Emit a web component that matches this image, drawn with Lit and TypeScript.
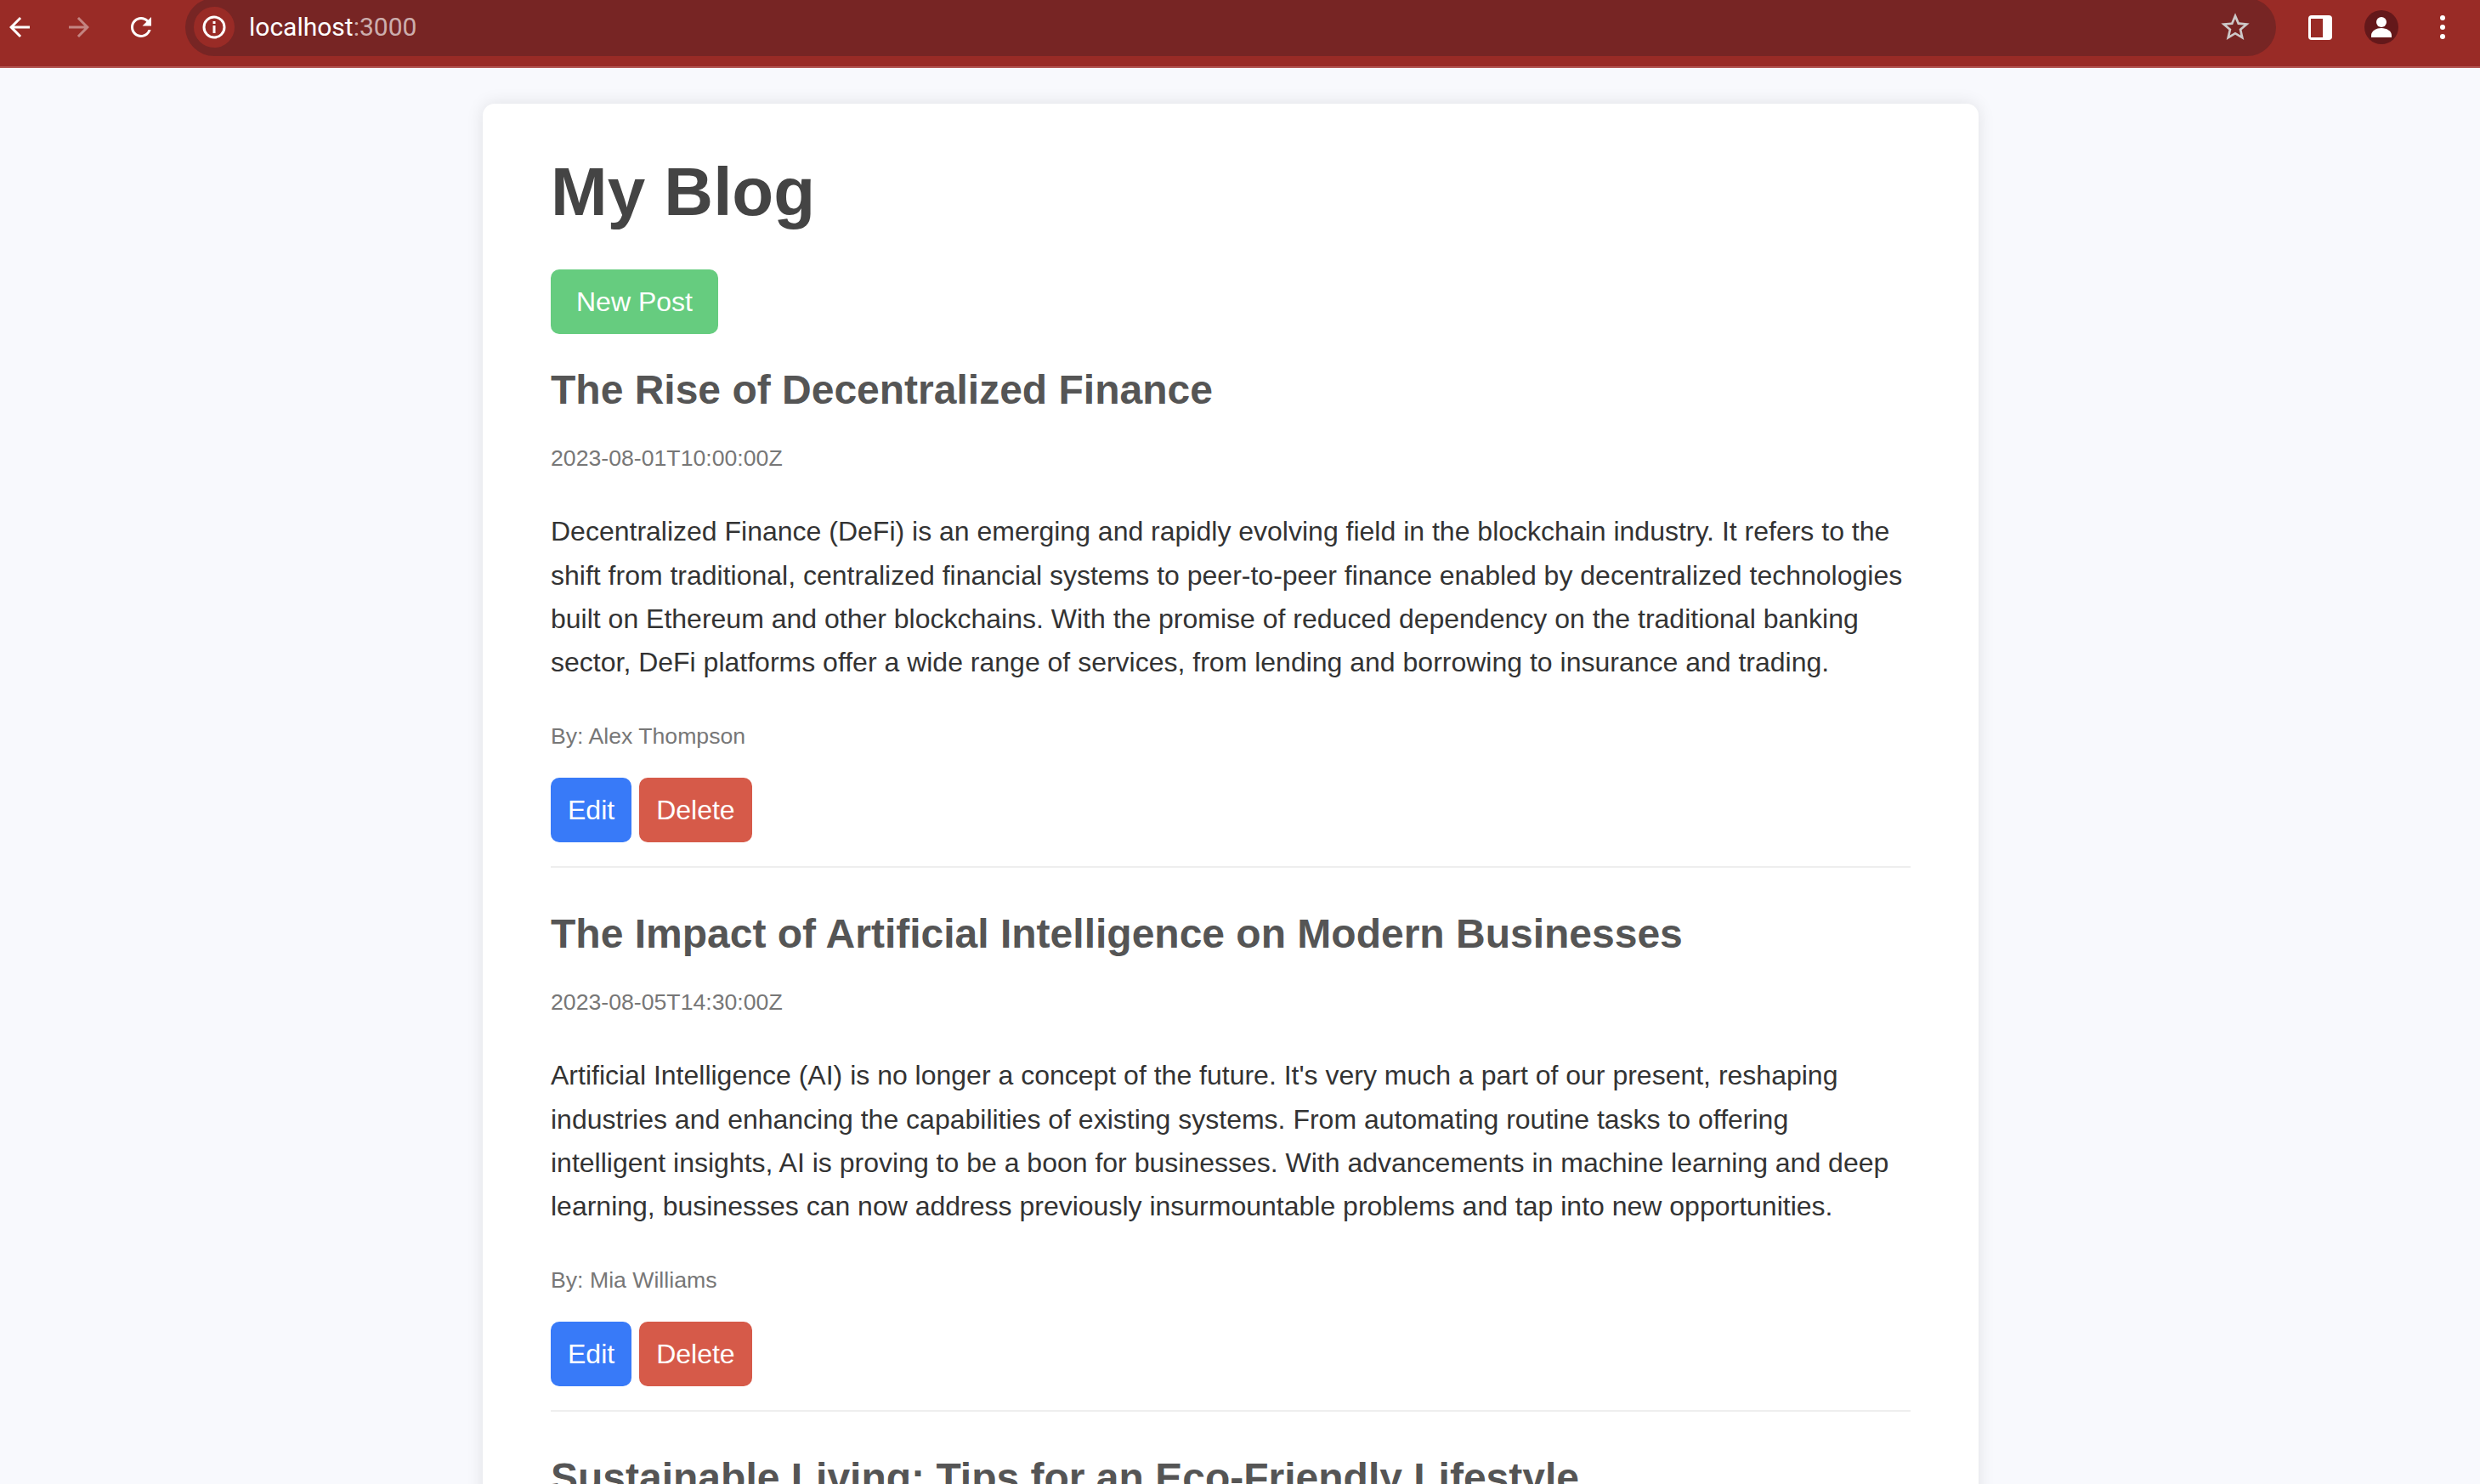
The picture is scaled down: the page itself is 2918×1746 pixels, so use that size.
import { LitElement, html, css, svg } from "lit";
import { customElement } from "lit/decorators.js";

const ICON = {
  back: svg`<path d="M20 11H7.83l5.59-5.59L12 4l-8 8 8 8 1.41-1.41L7.83 13H20v-2z"/>`,
  forward: svg`<path d="M4 11h12.17l-5.59-5.59L12 4l8 8-8 8-1.41-1.41L16.17 13H4v-2z"/>`,
  reload: svg`<path d="M17.65 6.35C16.2 4.9 14.21 4 12 4c-4.42 0-7.99 3.58-7.99 8s3.57 8 7.99 8c3.73 0 6.84-2.55 7.73-6h-2.08c-.82 2.33-3.04 4-5.65 4-3.31 0-6-2.69-6-6s2.69-6 6-6c1.66 0 3.14.69 4.22 1.78L13 11h7V4l-2.35 2.35z"/>`,
  star: svg`<path d="M22 9.24l-7.19-.62L12 2 9.19 8.63 2 9.24l5.46 4.73L5.82 21 12 17.27 18.18 21l-1.63-7.03L22 9.24zM12 15.4l-3.76 2.27 1-4.28-3.32-2.88 4.38-.38L12 6.1l1.71 4.04 4.38.38-3.32 2.88 1 4.28L12 15.4z"/>`,
};

const POSTS = [
  {
    title: "The Rise of Decentralized Finance",
    date: "2023-08-01T10:00:00Z",
    body: "Decentralized Finance (DeFi) is an emerging and rapidly evolving field in the blockchain industry. It refers to the shift from traditional, centralized financial systems to peer-to-peer finance enabled by decentralized technologies built on Ethereum and other blockchains. With the promise of reduced dependency on the traditional banking sector, DeFi platforms offer a wide range of services, from lending and borrowing to insurance and trading.",
    author: "Alex Thompson",
  },
  {
    title: "The Impact of Artificial Intelligence on Modern Businesses",
    date: "2023-08-05T14:30:00Z",
    body: "Artificial Intelligence (AI) is no longer a concept of the future. It's very much a part of our present, reshaping industries and enhancing the capabilities of existing systems. From automating routine tasks to offering intelligent insights, AI is proving to be a boon for businesses. With advancements in machine learning and deep learning, businesses can now address previously insurmountable problems and tap into new opportunities.",
    author: "Mia Williams",
  },
];

@customElement("app-root")
export class AppRoot extends LitElement {
  static styles = css`
    :host {
      display: block;
      height: 1746px;
      overflow: hidden;
      background: #f8f9fd;
      font-family: "Liberation Sans", Arial, sans-serif;
      font-size: 32px;
      line-height: 1.6;
    }
    .toolbar {
      display: flex;
      align-items: flex-start;
      height: 78px;
      background: #992b26;
      border-bottom: 2px solid #b25653;
      overflow: hidden;
    }
    .nav {
      display: flex;
      align-items: center;
      height: 64px;
      flex: none;
    }
    .icon {
      width: 46px;
      height: 46px;
      display: flex;
      align-items: center;
      justify-content: center;
      flex: none;
    }
    .icon svg {
      fill: #fff;
      display: block;
    }
    .dim svg {
      fill: rgba(255, 255, 255, 0.42);
    }
    .forward {
      margin-left: 24px;
    }
    .reload {
      margin-left: 27px;
    }
    .omni {
      flex: 1;
      display: flex;
      align-items: center;
      height: 68px;
      margin: -2px 0 0 29px;
      border-radius: 34px;
      background: #772524;
      padding-left: 10px;
      min-width: 0;
    }
    .info {
      width: 48px;
      height: 48px;
      border-radius: 50%;
      background: #992b26;
      display: flex;
      align-items: center;
      justify-content: center;
      flex: none;
    }
    .url {
      margin-left: 17px;
      font-family: Roboto, "Liberation Sans", sans-serif;
      font-size: 30px;
      line-height: 36px;
      color: #fff;
      flex: 1;
    }
    .url span {
      color: rgba(255, 255, 255, 0.65);
    }
    .star {
      margin-right: 25px;
    }
    .star svg {
      fill: #cdc8c8;
    }
    .side {
      flex: none;
      width: 240px;
      display: flex;
      align-items: center;
      height: 64px;
      padding-left: 29px;
      box-sizing: border-box;
      gap: 26px;
    }
    .panel {
      width: 28px;
      height: 29px;
      background: #fff;
      border-radius: 4px;
      padding: 4px 11px 3px 3px;
      box-sizing: border-box;
    }
    .panel i {
      display: block;
      width: 100%;
      height: 100%;
      background: #992b26;
    }
    .avatar {
      width: 40px;
      height: 40px;
      border-radius: 50%;
      background: #64181a;
    }
    .page {
      padding-right: 22px;
    }
    .card {
      width: 1760px;
      box-sizing: border-box;
      margin: 42px auto 0;
      padding: 40px 80px 0;
      background: #fff;
      border-radius: 14px;
      box-shadow: 0 0 20px rgba(0, 0, 0, 0.1);
    }
    h1 {
      margin: 0 0 27px;
      font-size: 80px;
      font-weight: 700;
      line-height: 128px;
      color: #444;
    }
    .btn {
      display: block;
      border: 0;
      border-radius: 10px;
      color: #fff;
      font: inherit;
      line-height: 36px;
      padding: 20px;
    }
    .new {
      background: #66cc7f;
      padding: 20px 30px;
      margin-bottom: 27px;
    }
    .post {
      padding-bottom: 28px;
      margin-bottom: 39px;
      border-bottom: 2px solid #eee;
    }
    h2 {
      margin: 0 0 20px;
      padding-top: 1px;
      font-size: 48px;
      font-weight: 700;
      line-height: 76.8px;
      color: #555;
    }
    .meta {
      margin: 0;
      font-size: 26.67px;
      color: #777;
    }
    .date {
      margin-bottom: 40px;
    }
    .body {
      margin: 0 0 40px;
      color: #333;
    }
    .actions {
      display: flex;
      gap: 9px;
      margin-top: 27px;
    }
    .edit {
      background: #387af8;
    }
    .delete {
      background: #d65a49;
    }
  `;

  private icon(path: unknown, size: number, cls = "") {
    return html`<div class="icon ${cls}">
      <svg width=${size} height=${size} viewBox="0 0 24 24">${path}</svg>
    </div>`;
  }

  render() {
    return html`
      <div class="toolbar">
        <div class="nav">
          ${this.icon(ICON.back, 36)}
          ${this.icon(ICON.forward, 36, "forward dim")}
          ${this.icon(ICON.reload, 36, "reload")}
        </div>
        <div class="omni">
          <div class="info">
            <svg width="30" height="30" viewBox="0 0 30 30">
              <circle cx="15" cy="15" r="12" fill="none" stroke="#fff" stroke-width="3" />
              <rect x="13.5" y="13" width="3" height="9" fill="#fff" />
              <rect x="13.5" y="8" width="3" height="3" fill="#fff" />
            </svg>
          </div>
          <div class="url">localhost<span>:3000</span></div>
          ${this.icon(ICON.star, 40, "star")}
        </div>
        <div class="side">
          <div class="icon"><div class="panel"><i></i></div></div>
          <div class="icon">
            <div class="avatar">
              <svg width="40" height="40" viewBox="0 0 40 40">
                <circle cx="20" cy="14" r="6" fill="#fff" />
                <path d="M8 32v-2.5c0-5 6-8.5 12-8.5s12 3.5 12 8.5V32z" fill="#fff" />
              </svg>
            </div>
          </div>
          <div class="icon">
            <svg width="8" height="30" viewBox="0 0 8 30">
              <circle cx="4" cy="4" r="3" fill="#fff" />
              <circle cx="4" cy="15" r="3" fill="#fff" />
              <circle cx="4" cy="26" r="3" fill="#fff" />
            </svg>
          </div>
        </div>
      </div>
      <div class="page">
        <main class="card">
          <h1>My Blog</h1>
          <button class="btn new">New Post</button>
          ${POSTS.map(
            (p) => html`<article class="post">
              <h2>${p.title}</h2>
              <p class="meta date">${p.date}</p>
              <p class="body">${p.body}</p>
              <p class="meta">By: ${p.author}</p>
              <div class="actions">
                <button class="btn edit">Edit</button>
                <button class="btn delete">Delete</button>
              </div>
            </article>`
          )}
          <h2>Sustainable Living: Tips for an Eco-Friendly Lifestyle</h2>
        </main>
      </div>
    `;
  }
}
